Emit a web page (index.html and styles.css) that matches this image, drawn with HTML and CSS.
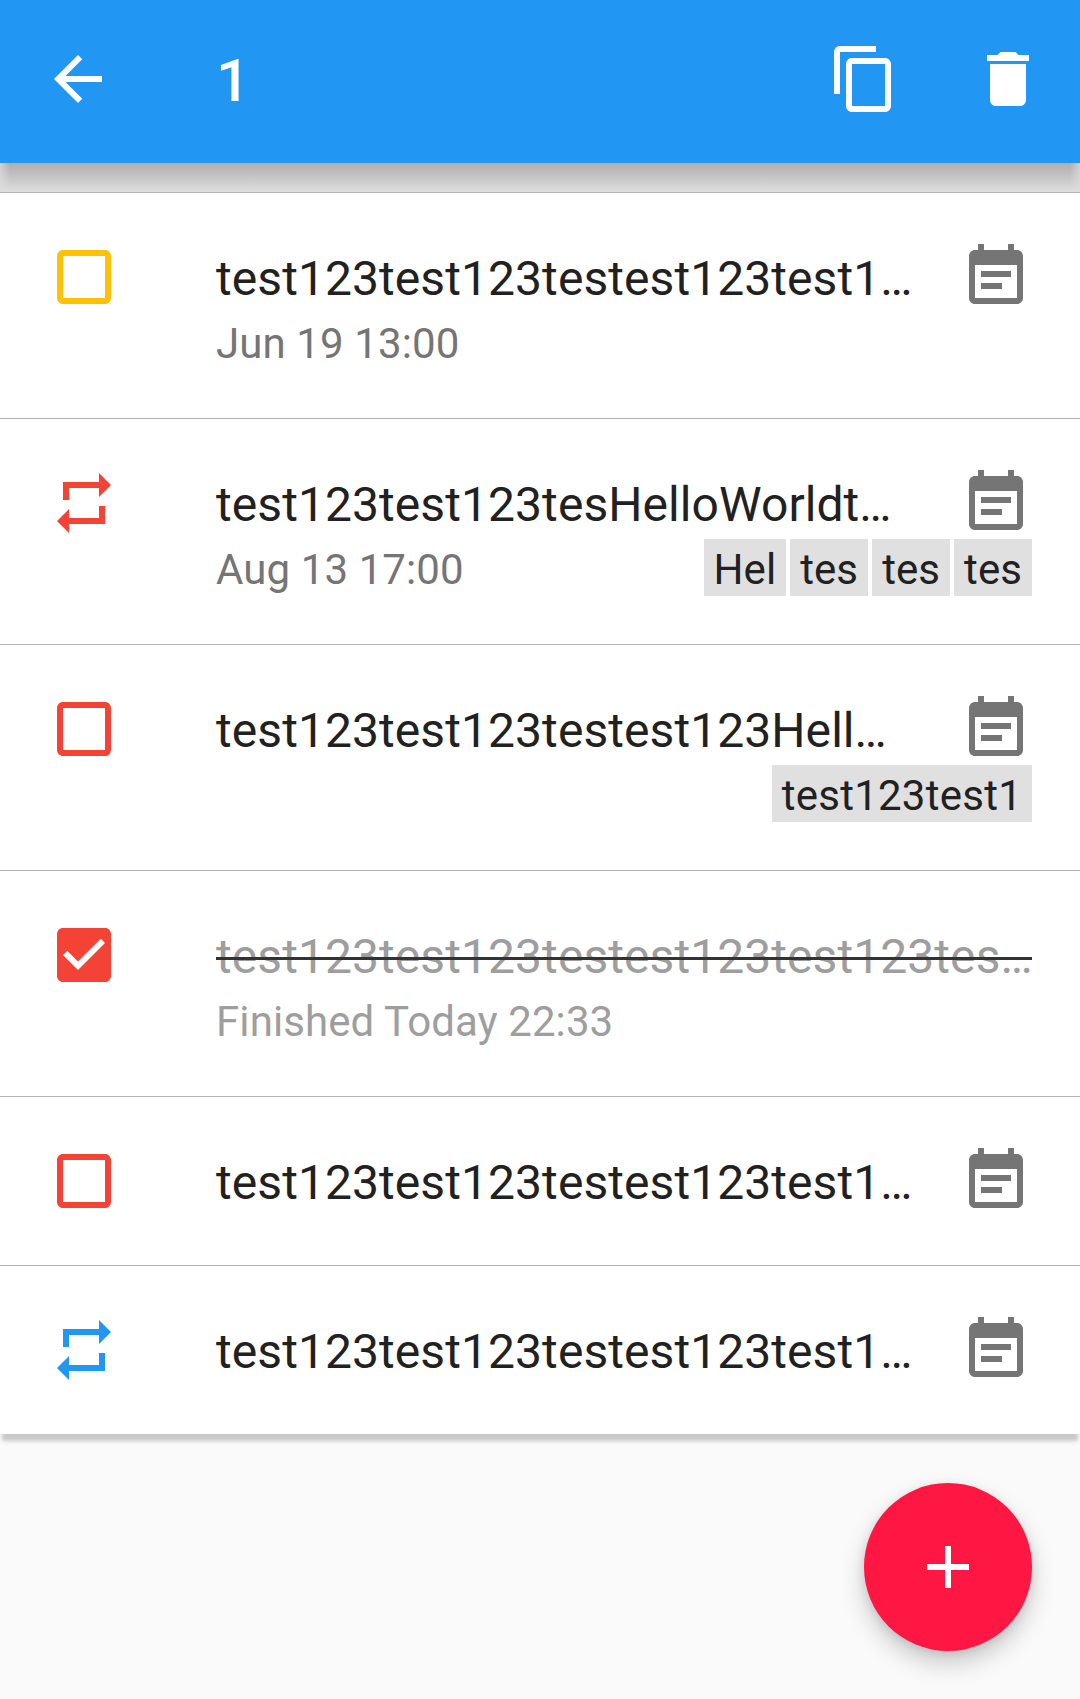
FILE: index.html
```html
<!DOCTYPE html>
<html lang="en">
<head>
<meta charset="utf-8">
<title>Tasks</title>
<link rel="stylesheet" href="styles.css">
</head>
<body>
<svg class="sprites" width="0" height="0" aria-hidden="true">
  <symbol id="i-back" viewBox="0 0 24 24"><path d="M20 11H7.83l5.59-5.59L12 4l-8 8 8 8 1.41-1.41L7.83 13H20v-2z"/></symbol>
  <symbol id="i-copy" viewBox="0 0 24 24"><path d="M16 1H4c-1.1 0-2 .9-2 2v14h2V3h12V1zm3 4H8c-1.1 0-2 .9-2 2v14c0 1.1.9 2 2 2h11c1.1 0 2-.9 2-2V7c0-1.1-.9-2-2-2zm0 16H8V7h11v14z"/></symbol>
  <symbol id="i-delete" viewBox="0 0 24 24"><path d="M6 19c0 1.1.9 2 2 2h8c1.1 0 2-.9 2-2V7H6v12zM19 4h-3.5l-1-1h-5l-1 1H5v2h14V4z"/></symbol>
  <symbol id="i-box" viewBox="0 0 24 24"><path d="M19 5v14H5V5h14m0-2H5c-1.1 0-2 .9-2 2v14c0 1.1.9 2 2 2h14c1.1 0 2-.9 2-2V5c0-1.1-.9-2-2-2z"/></symbol>
  <symbol id="i-checked" viewBox="0 0 24 24"><path d="M19 3H5c-1.11 0-2 .9-2 2v14c0 1.1.89 2 2 2h14c1.11 0 2-.9 2-2V5c0-1.1-.89-2-2-2zm-9 14l-5-5 1.41-1.41L10 14.17l7.59-7.59L19 8l-9 9z"/></symbol>
  <symbol id="i-repeat" viewBox="0 0 24 24"><path d="M7 7h10v3l4-4-4-4v3H5v6h2V7zm10 10H7v-3l-4 4 4 4v-3h12v-6h-2v4z"/></symbol>
  <symbol id="i-event" viewBox="0 0 24 24"><path d="M17 10H7v2h10v-2zm2-7h-1V1h-2v2H8V1H6v2H5c-1.11 0-1.99.9-1.99 2L3 19c0 1.1.89 2 2 2h14c1.1 0 2-.9 2-2V5c0-1.1-.9-2-2-2zm0 16H5V8h14v11zm-5-5H7v2h7v-2z"/></symbol>
  <symbol id="i-add" viewBox="0 0 24 24"><path d="M19 13h-6v6h-2v-6H5v-2h6V5h2v6h6v2z"/></symbol>
</svg>

<header class="toolbar">
  <svg class="icon nav-icon"><use href="#i-back"/></svg>
  <h1 class="toolbar-title">1</h1>
  <svg class="icon action-copy"><use href="#i-copy"/></svg>
  <svg class="icon action-delete"><use href="#i-delete"/></svg>
</header>

<main class="list">
  <article class="task">
    <svg class="icon state amber"><use href="#i-box"/></svg>
    <div class="body">
      <div class="title">test123test123testest123test1…</div>
      <div class="meta"><span class="when">Jun 19 13:00</span></div>
    </div>
    <svg class="icon kind"><use href="#i-event"/></svg>
  </article>

  <article class="task">
    <svg class="icon state red"><use href="#i-repeat"/></svg>
    <div class="body">
      <div class="title">test123test123tesHelloWorldt…</div>
      <div class="meta">
        <span class="when">Aug 13 17:00</span>
        <span class="tags"><span class="tag">Hel</span><span class="tag">tes</span><span class="tag">tes</span><span class="tag">tes</span></span>
      </div>
    </div>
    <svg class="icon kind"><use href="#i-event"/></svg>
  </article>

  <article class="task">
    <svg class="icon state red"><use href="#i-box"/></svg>
    <div class="body">
      <div class="title">test123test123testest123Hell…</div>
      <div class="meta">
        <span class="when"></span>
        <span class="tags"><span class="tag tag-long">test123test1</span></span>
      </div>
    </div>
    <svg class="icon kind"><use href="#i-event"/></svg>
  </article>

  <article class="task done">
    <svg class="icon state red"><use href="#i-checked"/></svg>
    <div class="body">
      <div class="title">test123test123testest123test123tes…</div>
      <div class="meta"><span class="when">Finished Today 22:33</span></div>
    </div>
  </article>

  <article class="task compact">
    <svg class="icon state red"><use href="#i-box"/></svg>
    <div class="body">
      <div class="title">test123test123testest123test1…</div>
    </div>
    <svg class="icon kind"><use href="#i-event"/></svg>
  </article>

  <article class="task compact">
    <svg class="icon state blue"><use href="#i-repeat"/></svg>
    <div class="body">
      <div class="title">test123test123testest123test1…</div>
    </div>
    <svg class="icon kind"><use href="#i-event"/></svg>
  </article>
</main>

<button class="fab" type="button" aria-label="Add"><svg class="icon"><use href="#i-add"/></svg></button>
</body>
</html>
```

FILE: styles.css
```css
* { box-sizing: border-box; }

html, body {
  margin: 0;
  height: 100%;
}

body {
  position: relative;
  width: 1080px;
  height: 1699px;
  overflow: hidden;
  background: #fafafa;
  color: #212121;
  font-family: Roboto, "Liberation Sans", sans-serif;
}

.sprites { position: absolute; }

.icon {
  display: block;
  flex: none;
  width: 72px;
  height: 72px;
  fill: currentColor;
}

/* Toolbar */
.toolbar {
  position: relative;
  z-index: 2;
  display: flex;
  align-items: flex-start;
  height: 163px;
  padding-top: 43px;
  background: #2196f3;
  color: #fff;
}

.nav-icon { margin-left: 42px; }

.toolbar-title {
  flex: 1;
  margin: 2px 0 0 102px;
  font-size: 60px;
  font-weight: 500;
  line-height: 72px;
}

.action-copy { margin-right: 72px; }
.action-delete { margin-right: 36px; }

/* List */
.list {
  position: relative;
  padding-top: 29px;
  background:
    linear-gradient(90deg, rgba(222, 222, 222, .7), rgba(222, 222, 222, 0) 10px, rgba(222, 222, 222, 0) calc(100% - 10px), rgba(222, 222, 222, .7)) top / 100% 29px no-repeat,
    linear-gradient(#aeaeae 0, #dedede 29px) top / 100% 29px no-repeat;
}

.task {
  position: relative;
  display: flex;
  align-items: flex-start;
  height: 226px;
  padding: 48px 48px 0;
  background: #fff;
  border-top: 1px solid #b3b3b3;
}

.task.compact { height: 169px; }

.task:last-child {
  box-shadow: 0 9px 4px -2px rgba(0, 0, 0, .2);
}

.state { margin-right: 96px; }
.amber { color: #ffc107; }
.red { color: #f44336; }
.blue { color: #2196f3; }

.body {
  flex: 1;
  min-width: 0;
}

.title {
  overflow: hidden;
  margin: 2px 112px 0 0;
  font-size: 48px;
  letter-spacing: .07px;
  line-height: 72px;
  white-space: nowrap;
}

.meta {
  display: flex;
  justify-content: space-between;
  align-items: flex-start;
  height: 57px;
  font-size: 42px;
  letter-spacing: .1px;
  line-height: 57px;
}

.when { color: #757575; }

.tags {
  display: flex;
  gap: 4px;
  margin-top: -2px;
}

.tag {
  height: 57px;
  padding: 2px 10px 0;
  background: #e0e0e0;
  color: #212121;
  letter-spacing: .08px;
}

.tag-long { letter-spacing: .25px; }

/* The calendar sits over the end of the body column, which tags run beneath. */
.kind {
  position: absolute;
  top: 48px;
  right: 48px;
  color: #757575;
}

.task.done .title {
  margin-right: 0;
  color: #9e9e9e;
  text-decoration: line-through;
  text-decoration-color: #333;
  text-decoration-thickness: 3px;
}
.task.done .when { color: #9e9e9e; }

/* Floating action button */
.fab {
  position: absolute;
  right: 48px;
  bottom: 48px;
  display: flex;
  align-items: center;
  justify-content: center;
  width: 168px;
  height: 168px;
  padding: 0;
  border: 0;
  border-radius: 50%;
  background: #ff1744;
  color: #fff;
  box-shadow: 0 12px 24px rgba(0, 0, 0, .2), 0 2px 8px rgba(0, 0, 0, .1);
}
```
